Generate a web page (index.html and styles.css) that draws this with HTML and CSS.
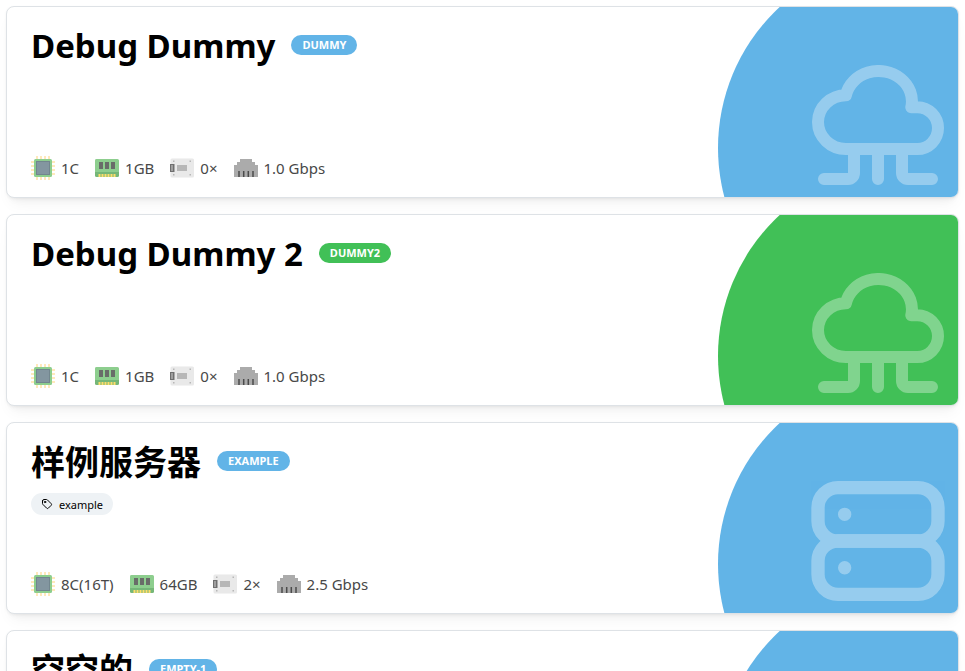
FILE: index.html
```html
<!DOCTYPE html>
<html lang="zh-CN">
<head>
<meta charset="utf-8">
<title>Servers</title>
<link rel="stylesheet" href="styles.css">
</head>
<body>
<svg class="sprite" aria-hidden="true">
  <symbol id="cpu" viewBox="0 0 24 24">
    <path d="M6 0v24M10 0v24M14 0v24M18 0v24M0 6h24M0 10h24M0 14h24M0 18h24" stroke="#ffe0a0" stroke-width="2"/>
    <rect x="3" y="3" width="18" height="18" rx="1.500" fill="#5eba5f"/>
    <rect x="5" y="5" width="14" height="14" fill="#37535f"/>
    <rect x="6" y="6" width="12" height="12" fill="#4f6b79"/>
  </symbol>
  <symbol id="ram" viewBox="0 0 24 24">
    <path d="M1.500 3h21A1.500 1.500 0 0 1 24 4.500V16H0V4.500A1.500 1.500 0 0 1 1.500 3Z" fill="#5eba5f"/>
    <path d="M0 16h24v3.500a1.500 1.500 0 0 1-1.500 1.500h-21A1.500 1.500 0 0 1 0 19.500Z" fill="#3c9a40"/>
    <path d="M4 6h4v7H4zM10 6h4v7h-4zM16 6h4v7h-4z" fill="#2a2f2a"/>
    <path d="M4.500 18v3M7.500 18v3M10.500 18v3M13.500 18v3M16.500 18v3M19.500 18v3" stroke="#ffd02f" stroke-width="2"/>
  </symbol>
  <symbol id="drive" viewBox="0 0 24 24">
    <rect x="0.500" y="2.500" width="23.500" height="19" rx="1.500" fill="#e0e0e0"/>
    <path d="M0 8h4.500v8H0z" fill="#333"/>
    <path d="M1 9h2v6H1z" fill="#777"/>
    <path d="M7 9h10v6H7z" fill="#999"/>
    <path d="M3 4.500h1.500V6H3zM19.500 4.500H21V6h-1.500zM3 18h1.500v1.500H3zM19.500 18H21v1.500h-1.500z" fill="#999"/>
  </symbol>
  <symbol id="ethernet" viewBox="0 0 24 24">
    <path d="M6 3h12v3h3v3h3v12H0V9h3V6h3Z" fill="#888"/>
    <path d="M5 15v6M9.700 15v6M14.300 15v6M19 15v6" stroke="#000" stroke-width="1.500"/>
  </symbol>
  <symbol id="tag" viewBox="0 0 24 24">
    <g fill="none" stroke="currentColor" stroke-width="2" stroke-linecap="round" stroke-linejoin="round">
      <circle cx="8" cy="8" r="1.500"/>
      <path d="M3 6v5.172a2 2 0 0 0 .586 1.414l7.710 7.710a2.410 2.410 0 0 0 3.408 0l5.592-5.592a2.410 2.410 0 0 0 0-3.408l-7.710-7.710A2 2 0 0 0 11.172 3H6a3 3 0 0 0-3 3Z"/>
    </g>
  </symbol>
  <symbol id="cloud" viewBox="0 0 24 24">
    <path fill="none" stroke="#fff" stroke-width="2" stroke-linecap="round" stroke-linejoin="round" d="M6.657 16c-2.572 0-4.657-2.007-4.657-4.483c0-2.475 2.085-4.482 4.657-4.482c.393-1.762 1.794-3.200 3.675-3.773c1.880-.572 3.956-.193 5.444 1c1.488 1.190 2.162 3.007 1.770 4.769h.990c1.913 0 3.464 1.560 3.464 3.486c0 1.927-1.551 3.487-3.465 3.487H6.657M12 16v5M16 16v4a1 1 0 0 0 1 1h4M8 16v4a1 1 0 0 1-1 1H3"/>
  </symbol>
  <symbol id="server" viewBox="0 0 24 24">
    <g fill="none" stroke="#fff" stroke-width="2" stroke-linecap="round" stroke-linejoin="round">
      <rect x="3" y="4" width="18" height="8" rx="3"/>
      <rect x="3" y="12" width="18" height="8" rx="3"/>
      <path d="M7 8v.010M7 16v.010"/>
    </g>
  </symbol>
</svg>
<main class="page">
  <article class="card">
    <div class="art"><svg class="art-icon"><use href="#cloud"/></svg></div>
    <header class="heading"><h2 lang="en">Debug Dummy</h2><span class="badge">DUMMY</span></header>
    <ul class="stats">
      <li><svg><use href="#cpu"/></svg>1C</li>
      <li><svg><use href="#ram"/></svg>1GB</li>
      <li><svg><use href="#drive"/></svg>0×</li>
      <li><svg><use href="#ethernet"/></svg>1.0 Gbps</li>
    </ul>
  </article>
  <article class="card green">
    <div class="art"><svg class="art-icon"><use href="#cloud"/></svg></div>
    <header class="heading"><h2 lang="en">Debug Dummy 2</h2><span class="badge">DUMMY2</span></header>
    <ul class="stats">
      <li><svg><use href="#cpu"/></svg>1C</li>
      <li><svg><use href="#ram"/></svg>1GB</li>
      <li><svg><use href="#drive"/></svg>0×</li>
      <li><svg><use href="#ethernet"/></svg>1.0 Gbps</li>
    </ul>
  </article>
  <article class="card">
    <div class="art"><svg class="art-icon large"><use href="#server"/></svg></div>
    <header class="heading"><h2>样例服务器</h2><span class="badge">EXAMPLE</span></header>
    <div class="tags"><span class="tag"><svg><use href="#tag"/></svg>example</span></div>
    <ul class="stats">
      <li><svg><use href="#cpu"/></svg>8C(16T)</li>
      <li><svg><use href="#ram"/></svg>64GB</li>
      <li><svg><use href="#drive"/></svg>2×</li>
      <li><svg><use href="#ethernet"/></svg>2.5 Gbps</li>
    </ul>
  </article>
  <article class="card">
    <div class="art"></div>
    <header class="heading"><h2>空空的</h2><span class="badge">EMPTY-1</span></header>
  </article>
</main>
</body>
</html>
```
FILE: styles.css
```css
* { box-sizing: border-box; }
body {
  margin: 0;
  background: #fff;
  color: #000;
  font-family: "Noto Sans", "Noto Sans CJK SC", sans-serif;
}
.sprite { position: absolute; width: 0; height: 0; }
.page {
  display: flex;
  flex-direction: column;
  gap: 16px;
  height: 100vh;
  padding: 6px;
  overflow: hidden;
}
.card {
  --accent: #62b4e7;
  position: relative;
  display: flex;
  flex: none;
  flex-direction: column;
  min-height: 192px;
  padding: 16px 24px 17px;
  overflow: hidden;
  background: #fff;
  border: 1px solid #dee2e6;
  border-radius: 8px;
  box-shadow: 0 1px 3px rgba(0, 0, 0, .05), 0 10px 15px -5px rgba(0, 0, 0, .05), 0 7px 7px -5px rgba(0, 0, 0, .04);
}
.green { --accent: #41c057; }
.art {
  position: absolute;
  top: -51px;
  right: -144px;
  width: 384px;
  height: 384px;
  border-radius: 50%;
  background: var(--accent);
}
.art-icon {
  position: absolute;
  top: 97px;
  left: 88px;
  width: 144px;
  height: 144px;
  opacity: .33;
}
.art-icon.large { top: 89px; left: 80px; width: 160px; height: 160px; }
.heading { display: flex; align-items: center; gap: 16px; height: 46px; }
h2 { margin: 0; font-size: 34px; line-height: 46px; font-weight: 700; }
h2:lang(en) { font-size: 33px; }
.badge {
  height: 20px;
  margin-bottom: 2px;
  padding: 0 11px;
  border-radius: 10px;
  background: var(--accent);
  color: #fff;
  font-size: 11px;
  line-height: 20px;
  font-weight: 700;
}
.tags { display: flex; margin-top: 8px; }
.tag {
  display: flex;
  align-items: center;
  gap: 6px;
  height: 22px;
  padding: 0 10px;
  border-radius: 11px;
  background: #eef2f5;
  font-size: 11px;
}
.tag svg { width: 12px; height: 12px; }
.stats {
  display: flex;
  gap: 16px;
  margin: auto 0 0;
  padding: 0;
  list-style: none;
  color: #484848;
  font-size: 15px;
  line-height: 24px;
}
.stats li { display: flex; align-items: center; gap: 6px; }
.stats svg { width: 24px; height: 24px; opacity: .7; }
```
